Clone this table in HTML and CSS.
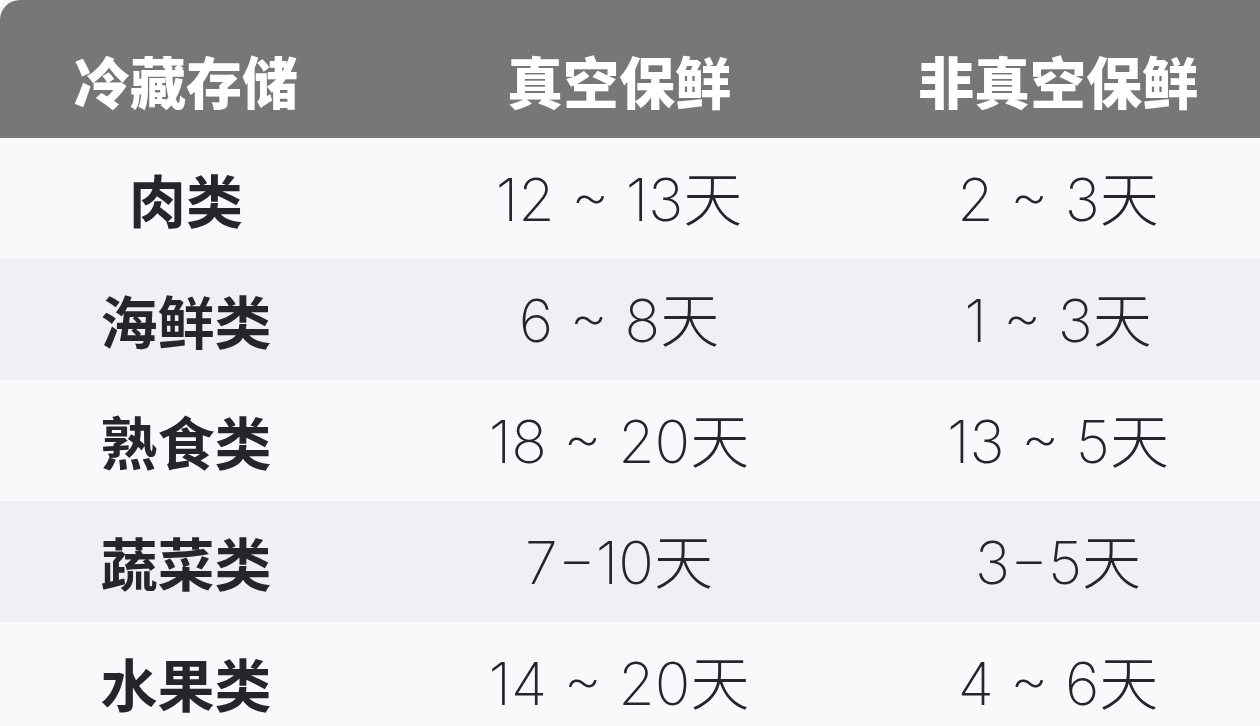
FILE: index.html
```html
<!DOCTYPE html>
<html lang="zh">
<head>
<meta charset="utf-8">
<link rel="stylesheet" href="styles.css">
</head>
<body>
<div class="table">
  <div class="row head">
    <div class="cell">冷藏存储</div>
    <div class="cell">真空保鲜</div>
    <div class="cell">非真空保鲜</div>
  </div>
  <div class="row light">
    <div class="cell name">肉类</div>
    <div class="cell val">12 ~ 13天</div>
    <div class="cell val">2 ~ 3天</div>
  </div>
  <div class="row dark">
    <div class="cell name">海鲜类</div>
    <div class="cell val">6 ~ 8天</div>
    <div class="cell val">1 ~ 3天</div>
  </div>
  <div class="row light">
    <div class="cell name">熟食类</div>
    <div class="cell val">18 ~ 20天</div>
    <div class="cell val">13 ~ 5天</div>
  </div>
  <div class="row dark">
    <div class="cell name">蔬菜类</div>
    <div class="cell val">7−10天</div>
    <div class="cell val">3−5天</div>
  </div>
  <div class="row light">
    <div class="cell name">水果类</div>
    <div class="cell val">14 ~ 20天</div>
    <div class="cell val">4 ~ 6天</div>
  </div>
</div>
</body>
</html>
```

FILE: styles.css
```css
html, body {
  margin: 0;
  padding: 0;
  width: 1260px;
  height: 726px;
  overflow: hidden;
  background: #f8f9fb;
  font-family: "Noto Sans CJK SC", "Noto Sans", sans-serif;
}
.table {
  display: flex;
  flex-direction: column;
}
.row {
  display: grid;
  grid-template-columns: 372px 494px 1fr;
  padding-right: 10px;
  height: 121px;
  align-items: center;
}
.row.head {
  height: 138px;
  background: #767778;
  color: #ffffff;
  border-top-left-radius: 20px;
  font-weight: 900;
  font-size: 56px;
}
.row.head .cell {
  padding-top: 22px;
}
.row.light { background: #f8f9fb; }
.row.dark { background: #eef0f3; }
.cell {
  text-align: center;
  line-height: 1;
  white-space: nowrap;
  padding-top: 0;
}
.name {
  font-weight: 700;
  font-size: 57px;
  color: #26262a;
}
.val {
  font-family: Inter, "Noto Sans CJK SC", sans-serif;
  font-weight: 250;
  font-size: 59px;
  color: #26262a;
  padding-top: 2px;
}
```
